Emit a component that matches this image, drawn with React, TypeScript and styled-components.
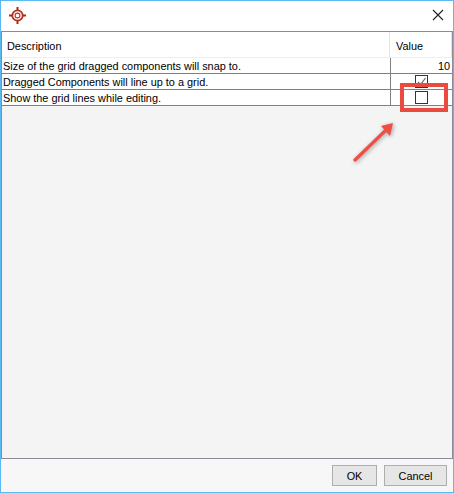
import React from 'react';
import styled, { createGlobalStyle } from 'styled-components';

const GlobalStyle = createGlobalStyle`
  html, body {
    margin: 0;
    padding: 0;
    background: #fff;
  }
`

const rows = [
    { text: 'Size of the grid dragged components will snap to.', value: '10' },
    { text: 'Dragged Components will line up to a grid.', checked: true },
    { text: 'Show the grid lines while editing.', checked: false },
]

const Logo = () => (
    <svg width="17" height="17" viewBox="0 0 17 17">
        <circle cx="8.5" cy="8.5" r="5.2" fill="none" stroke="#b8321f" strokeWidth="1.8" />
        <circle cx="8.5" cy="8.5" r="2.4" fill="none" stroke="#b8321f" strokeWidth="1.1" />
        <path d="M8.5 0v3.4M8.5 13.6v3.4M0 8.5h3.4M13.6 8.5h3.4" stroke="#a82a18" strokeWidth="2" />
    </svg>
)

const Arrow = () => (
    <ArrowSvg width="48" height="46" viewBox="0 0 48 46">
        <path d="M5 40L36 10" stroke="#f04e45" strokeWidth="3.2" strokeLinecap="round" />
        <path d="M43 3L31 6L40 16Z" fill="#f04e45" />
    </ArrowSvg>
)

export default function App() {
    return (
        <Window>
            <GlobalStyle />
            <TitleBar>
                <Logo />
                <Close>
                    <svg width="12" height="12" viewBox="0 0 12 12">
                        <path d="M1 1L11 11M11 1L1 11" stroke="#222" strokeWidth="1.1" />
                    </svg>
                </Close>
            </TitleBar>
            <Body>
                <Panel>
                    <HeaderRow>
                        <HeaderCell>Description</HeaderCell>
                        <HeaderValue>Value</HeaderValue>
                    </HeaderRow>
                    {rows.map(r => (
                        <Row key={r.text}>
                            <TextCell>{r.text}</TextCell>
                            <ValueCell $numeric={!!r.value}>
                                {r.value ? r.value : (
                                    <CheckBox>
                                        {r.checked && (
                                            <svg width="11" height="11" viewBox="0 0 11 11">
                                                <path d="M2 6L4.5 8.5L9.5 2" fill="none" stroke="#666" strokeWidth="1.2" />
                                            </svg>
                                        )}
                                    </CheckBox>
                                )}
                            </ValueCell>
                        </Row>
                    ))}
                    <Highlight />
                    <Arrow />
                </Panel>
            </Body>
            <Footer>
                <Button $width={45}>OK</Button>
                <Button $width={63}>Cancel</Button>
            </Footer>
        </Window>
    );
}

const Window = styled.div`
  box-sizing: border-box;
  width: 454px;
  height: 493px;
  display: flex;
  flex-direction: column;
  border: 1px solid #5cb8f0;
  background: #f7f7f7;
  font-family: "Liberation Sans", Arial, sans-serif;
  font-size: 10.9px;
  color: #000;
`

const TitleBar = styled.div`
  box-sizing: border-box;
  height: 30px;
  flex-shrink: 0;
  background: #fff;
  display: flex;
  align-items: center;
  justify-content: space-between;
  padding: 0 9px 2px 8px;
`

const Close = styled.div`
  display: flex;
`

const Body = styled.div`
  flex: 1;
  display: flex;
`

const Panel = styled.div`
  position: relative;
  flex: 1;
  box-sizing: border-box;
  border: 1px solid #8a8a9a;
  background: #f4f4f4;
`

const HeaderRow = styled.div`
  box-sizing: border-box;
  height: 26px;
  display: flex;
  background: #fff;
  border-bottom: 1px solid #eeeeee;
`

const HeaderCell = styled.div`
  flex: 1;
  padding-left: 5px;
  line-height: 28px;
  border-right: 1px solid #e3e3e3;
`

const HeaderValue = styled.div`
  box-sizing: border-box;
  width: 62px;
  padding-left: 6px;
  line-height: 28px;
  border-right: 1px solid #e3e3e3;
`

const Row = styled.div`
  box-sizing: border-box;
  height: 16px;
  display: flex;
  background: #fff;
  border-bottom: 1px solid #808080;
`

const TextCell = styled.div`
  flex: 1;
  padding-left: 1px;
  line-height: 16px;
  white-space: nowrap;
  overflow: hidden;
`

const ValueCell = styled.div<{ $numeric: boolean }>`
  box-sizing: border-box;
  width: 62px;
  border-left: 1px solid #808080;
  display: flex;
  align-items: center;
  justify-content: ${props => props.$numeric ? 'flex-end' : 'center'};
  padding-right: ${props => props.$numeric ? '2px' : '0'};
  line-height: 16px;
`

const CheckBox = styled.div`
  box-sizing: border-box;
  width: 13px;
  height: 13px;
  border: 1px solid #333;
  background: #fff;
  display: flex;
`

const Highlight = styled.div`
  position: absolute;
  left: 398px;
  top: 51px;
  width: 48px;
  height: 29px;
  box-sizing: border-box;
  border: 4px solid #ea4a42;
`

const ArrowSvg = styled.svg`
  position: absolute;
  left: 348px;
  top: 88px;
  filter: drop-shadow(1px 1px 2px rgba(0, 0, 0, 0.35));
`

const Footer = styled.div`
  height: 33px;
  flex-shrink: 0;
  display: flex;
  justify-content: flex-end;
  align-items: center;
  gap: 7px;
  padding: 0 6px;
`

const Button = styled.div<{ $width: number }>`
  box-sizing: border-box;
  width: ${props => props.$width}px;
  height: 21px;
  border: 1px solid #adadad;
  background: #e6e6e6;
  display: flex;
  align-items: center;
  justify-content: center;
`
